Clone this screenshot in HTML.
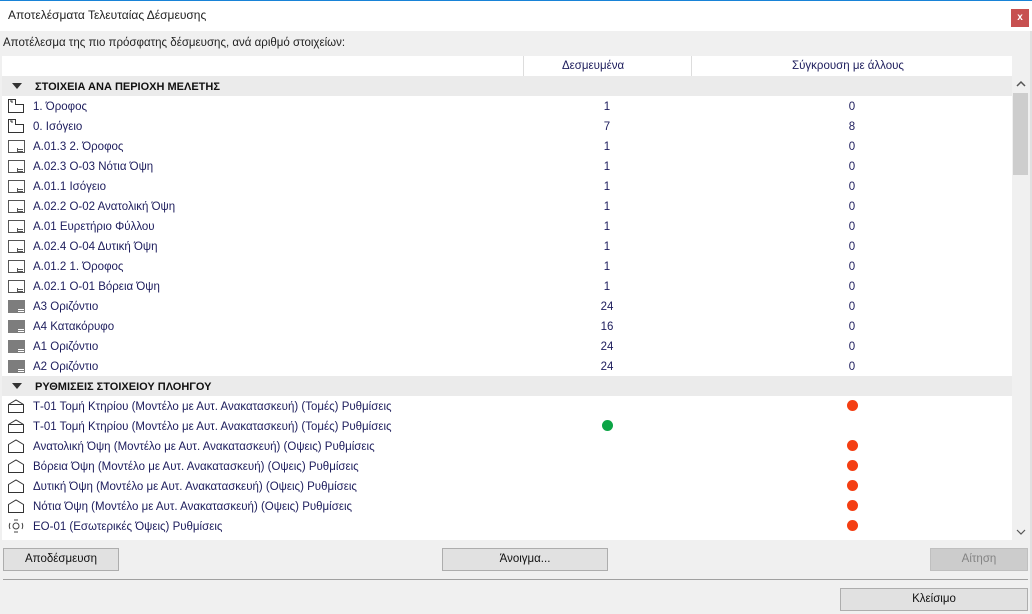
<!DOCTYPE html>
<html><head><meta charset="utf-8"><style>
*{margin:0;padding:0;box-sizing:border-box}
body{width:1032px;height:614px;overflow:hidden;background:#f0f0f0;font-family:"Segoe UI","Liberation Sans",sans-serif;font-size:11.5px;color:#1c1c5c;position:relative}
.title{position:absolute;left:0;top:0;width:1032px;height:31px;background:#fff;border-top:1px solid #1883d7;}
.title span{position:absolute;left:8px;top:7px;color:#222;font-size:12px}
.x{position:absolute;left:1011px;top:8px;width:18px;height:18px;background:#c75050;color:#fff;font-size:10px;font-weight:bold;text-align:center;line-height:17px}
.sub{position:absolute;left:3px;top:37px;color:#222}
.hdr{position:absolute;left:2px;top:56px;width:1010px;height:20px;background:#fff}
.hdr div{position:absolute;top:4px}
.vl{position:absolute;top:56px;width:1px;height:20px;background:#ddd}
.list{position:absolute;left:2px;top:76px;width:1010px;height:464px;background:#fff;overflow:hidden}
.r{position:relative;height:20px;line-height:22px}
.g{background:#ebebeb;font-weight:bold;font-size:11px;color:#111}
.g .tri{position:absolute;left:10px;top:7px;width:0;height:0;border-left:5px solid transparent;border-right:5px solid transparent;border-top:6px solid #333}
.t{position:absolute;left:31px}
.g .t{left:33px}
.ic{position:absolute;left:5px;top:3px}
.c1{position:absolute;left:600px;width:10px;text-align:center}
.c2{position:absolute;left:845px;width:10px;text-align:center}
.dot{position:absolute;top:4px;width:11px;height:11px;border-radius:50%}
.red{background:#f43e12;left:845px}
.grn{background:#0ca445;left:600px}
.sb{position:absolute;left:1012px;top:76px;width:18px;height:464px;background:#f0f0f0}
.thumb{position:absolute;left:1013px;top:93px;width:15px;height:82px;background:#cdcdcd}
.btn{position:absolute;height:23px;background:#e1e1e1;border:1px solid #adadad;text-align:center;line-height:21px;color:#111}
.sep{position:absolute;left:3px;top:579px;width:1025px;height:1px;background:#a0a0a0}
.rb{position:absolute;left:1030px;top:31px;width:2px;height:583px;background:#e0e0e0}
</style></head><body>
<svg width="0" height="0" style="position:absolute">
<symbol id="st" viewBox="0 0 18 14"><path d="M1.5 0.5h7v5h8v8h-15z M3 2h2v2" fill="none" stroke="#333"/></symbol>
<symbol id="ly" viewBox="0 0 18 14"><rect x="1.5" y="1.5" width="16" height="12" fill="none" stroke="#555"/><path d="M11 10.5h5M11 12.5h5M10.5 9v4.5" stroke="#555" fill="none"/></symbol>
<symbol id="lf" viewBox="0 0 18 14"><rect x="1" y="1" width="17" height="13" fill="#7d7d7d"/><path d="M11 10.5h6M11 12.5h6" stroke="#fff"/></symbol>
<symbol id="hs" viewBox="0 0 18 14"><path d="M1.5 5.5L9 1l7.5 4.5v8h-15z M1.5 5.5h15" fill="none" stroke="#333"/></symbol>
<symbol id="hv" viewBox="0 0 18 14"><path d="M1.5 5.5L9 1l7.5 4.5v8h-15z" fill="none" stroke="#333"/></symbol>
<symbol id="io" viewBox="0 0 18 14"><circle cx="9" cy="7" r="3" fill="none" stroke="#444"/><path d="M3 4a7 7 0 0 0 0 6M15 4a7 7 0 0 1 0 6M7 1h4M7 13h4" stroke="#444" fill="none"/></symbol>
</svg>
<div class="title"><span>Αποτελέσματα Τελευταίας Δέσμευσης</span><div class="x">x</div></div>
<div class="sub">Αποτέλεσμα της πιο πρόσφατης δέσμευσης, ανά αριθμό στοιχείων:</div>
<div class="hdr"><div style="left:560px">Δεσμευμένα</div><div style="left:790px">Σύγκρουση με άλλους</div></div>
<div class="vl" style="left:523px"></div><div class="vl" style="left:691px"></div>
<div class="list">
<div class="r g"><span class="tri"></span><span class="t">ΣΤΟΙΧΕΙΑ ΑΝΑ ΠΕΡΙΟΧΗ ΜΕΛΕΤΗΣ</span></div>
<div class="r"><svg class="ic" width="18" height="14"><use href="#st"/></svg><span class="t">1. Όροφος</span><span class="c1">1</span><span class="c2">0</span></div>
<div class="r"><svg class="ic" width="18" height="14"><use href="#st"/></svg><span class="t">0. Ισόγειο</span><span class="c1">7</span><span class="c2">8</span></div>
<div class="r"><svg class="ic" width="18" height="14"><use href="#ly"/></svg><span class="t">A.01.3 2. Όροφος</span><span class="c1">1</span><span class="c2">0</span></div>
<div class="r"><svg class="ic" width="18" height="14"><use href="#ly"/></svg><span class="t">A.02.3 Ο-03 Νότια Όψη</span><span class="c1">1</span><span class="c2">0</span></div>
<div class="r"><svg class="ic" width="18" height="14"><use href="#ly"/></svg><span class="t">A.01.1 Ισόγειο</span><span class="c1">1</span><span class="c2">0</span></div>
<div class="r"><svg class="ic" width="18" height="14"><use href="#ly"/></svg><span class="t">A.02.2 Ο-02 Ανατολική Όψη</span><span class="c1">1</span><span class="c2">0</span></div>
<div class="r"><svg class="ic" width="18" height="14"><use href="#ly"/></svg><span class="t">A.01 Ευρετήριο Φύλλου</span><span class="c1">1</span><span class="c2">0</span></div>
<div class="r"><svg class="ic" width="18" height="14"><use href="#ly"/></svg><span class="t">A.02.4 Ο-04 Δυτική Όψη</span><span class="c1">1</span><span class="c2">0</span></div>
<div class="r"><svg class="ic" width="18" height="14"><use href="#ly"/></svg><span class="t">A.01.2 1. Όροφος</span><span class="c1">1</span><span class="c2">0</span></div>
<div class="r"><svg class="ic" width="18" height="14"><use href="#ly"/></svg><span class="t">A.02.1 Ο-01 Βόρεια Όψη</span><span class="c1">1</span><span class="c2">0</span></div>
<div class="r"><svg class="ic" width="18" height="14"><use href="#lf"/></svg><span class="t">A3 Οριζόντιο</span><span class="c1" style="left:597px;width:16px">24</span><span class="c2">0</span></div>
<div class="r"><svg class="ic" width="18" height="14"><use href="#lf"/></svg><span class="t">A4 Κατακόρυφο</span><span class="c1" style="left:597px;width:16px">16</span><span class="c2">0</span></div>
<div class="r"><svg class="ic" width="18" height="14"><use href="#lf"/></svg><span class="t">A1 Οριζόντιο</span><span class="c1" style="left:597px;width:16px">24</span><span class="c2">0</span></div>
<div class="r"><svg class="ic" width="18" height="14"><use href="#lf"/></svg><span class="t">A2 Οριζόντιο</span><span class="c1" style="left:597px;width:16px">24</span><span class="c2">0</span></div>
<div class="r g"><span class="tri"></span><span class="t">ΡΥΘΜΙΣΕΙΣ ΣΤΟΙΧΕΙΟΥ ΠΛΟΗΓΟΥ</span></div>
<div class="r"><svg class="ic" width="18" height="14"><use href="#hs"/></svg><span class="t">Τ-01 Τομή Κτηρίου (Μοντέλο με Αυτ. Ανακατασκευή) (Τομές) Ρυθμίσεις</span><span class="dot red"></span></div>
<div class="r"><svg class="ic" width="18" height="14"><use href="#hs"/></svg><span class="t">Τ-01 Τομή Κτηρίου (Μοντέλο με Αυτ. Ανακατασκευή) (Τομές) Ρυθμίσεις</span><span class="dot grn"></span></div>
<div class="r"><svg class="ic" width="18" height="14"><use href="#hv"/></svg><span class="t">Ανατολική Όψη (Μοντέλο με Αυτ. Ανακατασκευή) (Οψεις) Ρυθμίσεις</span><span class="dot red"></span></div>
<div class="r"><svg class="ic" width="18" height="14"><use href="#hv"/></svg><span class="t">Βόρεια Όψη (Μοντέλο με Αυτ. Ανακατασκευή) (Οψεις) Ρυθμίσεις</span><span class="dot red"></span></div>
<div class="r"><svg class="ic" width="18" height="14"><use href="#hv"/></svg><span class="t">Δυτική Όψη (Μοντέλο με Αυτ. Ανακατασκευή) (Οψεις) Ρυθμίσεις</span><span class="dot red"></span></div>
<div class="r"><svg class="ic" width="18" height="14"><use href="#hv"/></svg><span class="t">Νότια Όψη (Μοντέλο με Αυτ. Ανακατασκευή) (Οψεις) Ρυθμίσεις</span><span class="dot red"></span></div>
<div class="r"><svg class="ic" width="18" height="14"><use href="#io"/></svg><span class="t">ΕΟ-01 (Εσωτερικές Όψεις) Ρυθμίσεις</span><span class="dot red"></span></div>
<div class="r"><svg class="ic" width="18" height="14"><use href="#ly"/></svg><span class="dot red"></span></div>
</div>
<div class="sb"></div><div class="thumb"></div>
<svg style="position:absolute;left:1016px;top:80px" width="10" height="8"><path d="M1 6l4-4 4 4" fill="none" stroke="#555" stroke-width="1.5"/></svg>
<svg style="position:absolute;left:1016px;top:528px" width="10" height="8"><path d="M1 2l4 4 4-4" fill="none" stroke="#555" stroke-width="1.2"/></svg>
<div class="btn" style="left:3px;top:548px;width:116px">Αποδέσμευση</div>
<div class="btn" style="left:442px;top:548px;width:166px">Άνοιγμα...</div>
<div class="btn" style="left:930px;top:548px;width:98px;background:#ccc;border-color:#bfbfbf;color:#838383">Αίτηση</div>
<div class="sep"></div>
<div class="btn" style="left:840px;top:588px;width:188px">Κλείσιμο</div>
<div class="rb"></div>
</body></html>
